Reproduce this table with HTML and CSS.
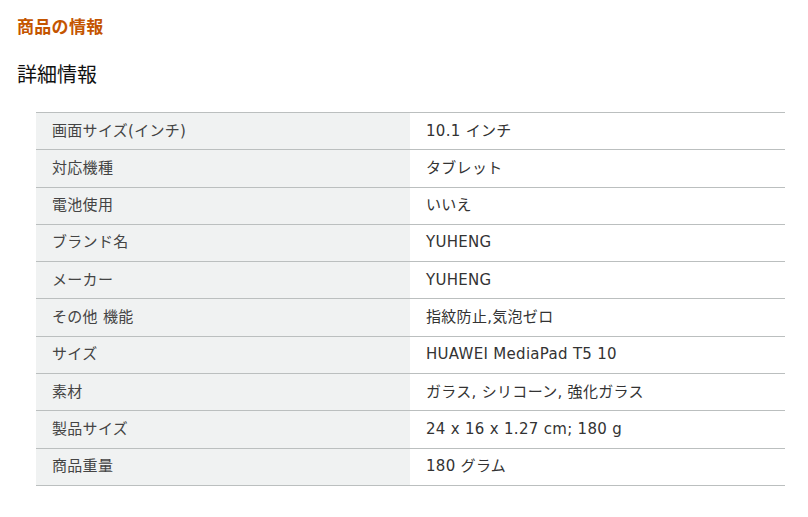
FILE: index.html
```html
<!DOCTYPE html>
<html lang="ja">
<head>
<meta charset="utf-8">
<link rel="stylesheet" href="styles.css">
</head>
<body>
<div class="page">
  <h2 class="section-title">商品の情報</h2>
  <h3 class="sub-title">詳細情報</h3>
  <table class="details">
    <tbody>
      <tr><th>画面サイズ(インチ)</th><td>10.1 インチ</td></tr>
      <tr><th>対応機種</th><td>タブレット</td></tr>
      <tr><th>電池使用</th><td>いいえ</td></tr>
      <tr><th>ブランド名</th><td>YUHENG</td></tr>
      <tr><th>メーカー</th><td>YUHENG</td></tr>
      <tr><th>その他 機能</th><td>指紋防止,気泡ゼロ</td></tr>
      <tr><th>サイズ</th><td>HUAWEI MediaPad T5 10</td></tr>
      <tr><th>素材</th><td>ガラス, シリコーン, 強化ガラス</td></tr>
      <tr><th>製品サイズ</th><td>24 x 16 x 1.27 cm; 180 g</td></tr>
      <tr><th>商品重量</th><td>180 グラム</td></tr>
    </tbody>
  </table>
</div>
</body>
</html>
```
FILE: styles.css
```css
html, body {
  margin: 0;
  padding: 0;
  background: #fff;
}
body {
  font-family: "DejaVu Sans", "Noto Sans CJK JP", sans-serif;
  color: #333;
}
.page {
  padding: 15px 17px 0 17px;
}
.section-title {
  margin: 0;
  font-size: 17px;
  line-height: 24px;
  font-weight: bold;
  color: #c45500;
  letter-spacing: 0.3px;
}
.sub-title {
  margin: 22px 0 0 0;
  font-size: 20px;
  line-height: 28px;
  font-weight: normal;
  color: #111;
}
.details {
  margin: 23px 0 0 19px;
  width: 749px;
  border-collapse: collapse;
  border-top: 1px solid #bbbfbf;
  font-size: 15px;
}
.details th, .details td {
  text-align: left;
  font-weight: normal;
  border-bottom: 1px solid #bbbfbf;
  padding: 7.5px 16px;
  line-height: 21.3px;
  color: #333;
  letter-spacing: 0.3px;
}
.details th {
  width: 342px;
  background: #f0f2f2;
  color: #444;
}
```
